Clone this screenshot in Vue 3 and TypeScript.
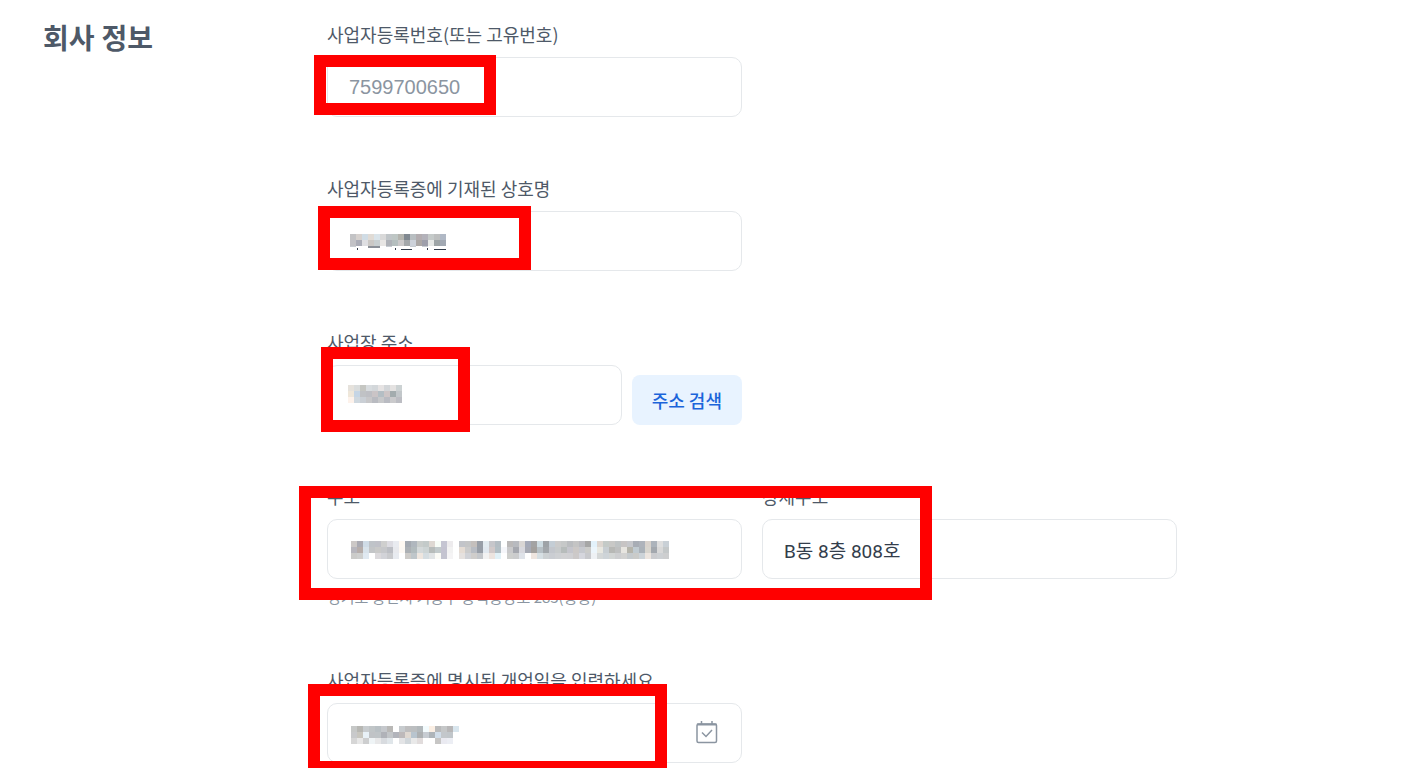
<script setup lang="ts">
import { ref } from 'vue'

interface Cell {
  x: number
  y: number
  fill: string
}

const CELL = 6

function toCells(rows: string[]): Cell[] {
  return rows.flatMap((row, y) =>
    row
      .split(' ')
      .map((hex, x) => ({ x: x * CELL, y: y * CELL, fill: '#' + hex }))
      .filter((cell) => cell.fill !== '#fff'),
  )
}

const nameCells = toCells([
  'c3c3c5 d6d1ce d0dce5 e0dbd5 dae4ea d9d9d9 c0c5c8 bec6c4 b4b4ae 808890 b8bec1 b3adb0 b3b2ba c5cac9 bdbfbf b0b8c5',
  'c2c2c6 abadb7 dfdfe2 cbc8c5 c8cfd1 e8e6e4 afb2b8 b5bfbf cbc9ca a3a7aa cdd2da aca8a6 9e9fab e6e8e6 9ea5a7 a2a9b3',
])
const codeCells = toCells([
  'e6e2dc dadddd c5c6c2 d8dcdf d3d7da e6e3e3 d3d6d9 e4e2e1 ccd2d3',
  'efe7da c5d5e5 c0c2c5 bebfc4 cac4c6 b4bec4 cdc5c6 a3acae c2c7ca',
  'fdf2eb cfd8df cacfd5 c7c7c9 b9bbc1 c7c8ca b9bbc2 cacacc bcbdc3',
])
const addressCells = toCells([
  'ccc8c6 aaaab2 cfdbe6 bfc3c8 c0c1c8 cfcfce dddce2 e9ebf0 fff9f2 a5aab1 b0b7be c9cdcb c3cac9 ded8d2 f7fcf6 c5c5d2 edebed fff c2c4c9 c4c5c6 c4bfbc 989ea7 e3ebf0 c6c6ca b4bdc3 fff bbb9b9 b8babf d9d6d4 a5aab8 a3a3a3 cddbe1 9ea3a7 c4cdd5 cbcbcb c6c8c8 bbbdc0 c4c4c4 bababf a6a6a6 e3f2fb ddd6d0 c4cac7 c8c8c6 bfc3c4 c7c4c4 c6c7cb a8adb5 aeb3bb d8d2cc acb3bb dedede c9d0d6',
  'b7b6bd b6adaa d8e2ea c3c5c7 c9c9c8 c6c7ca bcbec4 e8e9ed fcf8f3 acb0b4 b2bbbd d4d9da cdd4d4 b7bcba c2cacb c4c3d0 f2f2f2 fff e5dcd4 cbcbcb b8bcc3 989ea7 e1e8ef d1c9c9 b3bfc5 f5f6fa c9c9cb a6a8af d8d8de a7aab4 a3a09d b7c0c5 a2a7ab c3c6cc c7cacb b7bcbb c5c5cc ccc8c6 c6c8ce cbcbc9 ecf5fb e8e8e1 c8ced2 b7b8b5 bebfbf e7e5e0 b5b4ab c0cad0 abb2b9 d8d5ce a3a8ae d8d8d8 c4c8c9',
  'cbcbc9 cecfce e0e9f1 fff dbd9dc d2d3d8 c9cacd e8ebf0 fff cdcbc8 bfc6ca eee6df d5dde1 e1e4e5 fbfbf6 c4c4d0 f5f4f5 fff e5e1df d0d2d7 cfcdcb c4c7cb f2f2f2 ece4df e1f1f7 fff cecfcd cbcccd dfe3e9 fff eee5df d6dfe3 ccd1d3 cacdd2 ced0d3 d1d1d3 d0d0d3 ccc9c9 d5d6dd c8c9cd eef1f4 d5d8d8 ced4d8 d2d5d4 cdced0 d2d2d1 c5cacd cacbc9 ccd3d8 ece5df cbcccf cdd0d3 cdcecf',
])
const dateCells = toCells([
  'c6c8c7 b7b7b3 c8cccf c0c5c7 b9c0c4 c5c8cc b9b8b6 fff c7cbce bebebf bbbec0 b2b8bb f3fbfd fbefe4 b9babb c5c7c8 b8b7b8 d9e6ee',
  'c8c9cb c8c6bf e8f1f7 c0c3c6 bfc4c7 b0b2b8 c2c5c8 b2b4bb bdb9ba dfd8d1 b8c4ce adb0b2 c7ccd2 aeb4b9 d1dde9 c3c7cb c1c6ca fff',
  'd6d6d6 e7e7e7 cdcecf eff4f6 e8e8e9 d8dbdf e0e6ea fff e3e4e6 d1d7db e9e9e9 e1dcdc fff fff c7c6c5 eaeaf1 eceef4 fff',
])

const registrationNumber = ref('7599700650')
const companyName = ref('')
const postcode = ref('')
const address = ref('')
const addressDetail = ref('B동 8층 808호')
const openingDate = ref('')
</script>

<template>
  <main class="page">
    <h1 class="title">회사 정보</h1>
    <form class="form" @submit.prevent>
      <div class="field half">
        <label for="reg">사업자등록번호(또는 고유번호)</label>
        <div class="control">
          <input id="reg" v-model="registrationNumber" class="box number" type="text" readonly />
          <span class="frame frame-reg"></span>
        </div>
      </div>

      <div class="field half">
        <label for="name">사업자등록증에 기재된 상호명</label>
        <div class="control">
          <input id="name" v-model="companyName" class="box" type="text" />
          <svg class="mosaic mosaic-name" width="96" height="16" shape-rendering="crispEdges" aria-hidden="true">
            <rect v-for="(c, i) in nameCells" :key="i" :x="c.x" :y="c.y" width="6" height="6" :fill="c.fill" />
            <path d="M0 12h6v1H0zM24 12h6v1h-6zM36 12h6v1h-6zM60 12h6v1h-6zM72 12h6v1h-6z" fill="#c8cdd2" />
            <path d="M18 12h12v2H18z" fill="#8b9098" />
            <path d="M7 14h1v2H7zM45 14h1v2h-1zM51 15h11v1H51zM77 14h1v2h-1zM84 15h12v1H84z" fill="#333d4b" />
          </svg>
          <span class="frame frame-name"></span>
        </div>
      </div>

      <div class="field half">
        <label for="code">사업장 주소</label>
        <div class="control postcode">
          <input id="code" v-model="postcode" class="box" type="text" />
          <button class="search" type="button">주소 검색</button>
          <svg class="mosaic mosaic-code" width="54" height="18" shape-rendering="crispEdges" aria-hidden="true">
            <rect v-for="(c, i) in codeCells" :key="i" :x="c.x" :y="c.y" width="6" height="6" :fill="c.fill" />
          </svg>
          <span class="frame frame-code"></span>
        </div>
      </div>

      <div class="pair">
        <div class="field">
          <label for="addr">주소</label>
          <div class="control">
            <input id="addr" v-model="address" class="box" type="text" aria-describedby="addr-help" />
            <svg class="mosaic mosaic-addr" width="318" height="18" shape-rendering="crispEdges" aria-hidden="true">
              <rect v-for="(c, i) in addressCells" :key="i" :x="c.x" :y="c.y" width="6" height="6" :fill="c.fill" />
            </svg>
          </div>
          <p id="addr-help" class="help">경기도 용인시 기흥구 동백중앙로 283(중동)</p>
        </div>
        <div class="field">
          <label for="detail">상세주소</label>
          <div class="control">
            <input id="detail" v-model="addressDetail" class="box" type="text" />
          </div>
        </div>
        <span class="frame frame-addr"></span>
      </div>

      <div class="field half">
        <label for="date">사업자등록증에 명시된 개업일을 입력하세요</label>
        <div class="control">
          <input id="date" v-model="openingDate" class="box" type="text" />
          <svg class="mosaic mosaic-date" width="108" height="18" shape-rendering="crispEdges" aria-hidden="true">
            <rect v-for="(c, i) in dateCells" :key="i" :x="c.x" :y="c.y" width="6" height="6" :fill="c.fill" />
          </svg>
          <button class="calendar" type="button" aria-label="날짜 선택">
            <svg width="24" height="24" viewBox="0 0 24 24" fill="none" stroke="#8b95a1" stroke-width="1.5">
              <rect x="2" y="4" width="19.5" height="18.5" rx="1.5" />
              <path d="M2 4.5h19.5" stroke-width="2" />
              <path d="M6.5 1v4M17 1v4" />
              <path d="M7 12.5l4 4 6-6.5" />
            </svg>
          </button>
          <span class="frame frame-date"></span>
        </div>
      </div>
    </form>
  </main>
</template>

<style>
body {
  margin: 0;
  background: #fff;
}
</style>

<style scoped>
* {
  box-sizing: border-box;
}
.page {
  display: grid;
  grid-template-columns: 284px minmax(0, 850px);
  padding: 22px 43px 5px;
  overflow: clip;
  font-family: Roboto, 'Noto Sans CJK KR', sans-serif;
  color: #4e5968;
}
.title {
  margin: 0;
  font-size: 28px;
  line-height: 36px;
  font-weight: 700;
}
.form {
  display: flex;
  flex-direction: column;
  gap: 59px;
}
.field {
  display: flex;
  flex-direction: column;
  min-width: 0;
}
.half {
  width: calc(50% - 10px);
}
.pair {
  position: relative;
  display: grid;
  grid-template-columns: 1fr 1fr;
  gap: 20px;
}
label {
  margin-bottom: 11px;
  font-size: 18px;
  line-height: 24px;
  font-weight: 400;
  white-space: nowrap;
  font-family: 'Noto Sans CJK KR', sans-serif;
}
.control {
  position: relative;
  display: flex;
}
.box {
  flex: 1;
  min-width: 0;
  height: 60px;
  padding: 0 21px;
  border: 1px solid #e5e8eb;
  border-radius: 10px;
  outline: none;
  background: #fff;
  color: #333d4b;
  font-family: inherit;
  font-size: 19px;
  font-weight: 400;
}
.number {
  color: #8b95a1;
  font-family: 'Liberation Sans', sans-serif;
  font-size: 20px;
}
.postcode {
  gap: 10px;
  align-items: flex-end;
}
.search {
  height: 50px;
  padding: 0 20px;
  border: 0;
  border-radius: 8px;
  background: #e8f3ff;
  color: #1b64da;
  font-family: 'Noto Sans CJK KR', sans-serif;
  font-size: 18px;
  font-weight: 500;
}
.help {
  margin: 6px 0 0;
  font-family: 'Noto Sans CJK KR', sans-serif;
  font-size: 15px;
  line-height: 24px;
  color: #8b95a1;
  white-space: nowrap;
}
.calendar {
  position: absolute;
  top: 17px;
  right: 23px;
  width: 24px;
  height: 24px;
  padding: 0;
  border: 0;
  background: none;
}
.calendar svg {
  display: block;
}
.mosaic {
  position: absolute;
  left: 24px;
  top: 23px;
}
.mosaic-name {
  left: 23px;
}
.mosaic-code {
  left: 21px;
  top: 20px;
}
.mosaic-addr {
  top: 22px;
}
.frame {
  position: absolute;
  z-index: 1;
  border: 12px solid #f00;
  pointer-events: none;
}
.frame-reg {
  left: -13px;
  top: -2px;
  width: 182px;
  height: 60px;
}
.frame-name {
  left: -9px;
  top: -5px;
  width: 213px;
  height: 64px;
}
.frame-code {
  left: -6px;
  top: -18px;
  width: 149px;
  height: 85px;
}
.frame-addr {
  left: -28px;
  top: 2px;
  width: 633px;
  height: 114px;
}
.frame-date {
  left: -19px;
  top: -19px;
  width: 359px;
  height: 89px;
}
</style>
